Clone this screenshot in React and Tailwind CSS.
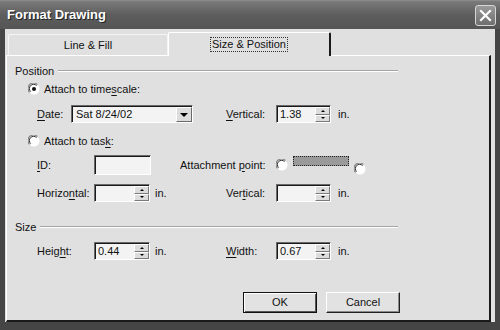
import React from "react";

function Radio({ checked }) {
    return (
        <svg width="12" height="12" viewBox="0 0 12 12" className="shrink-0">
            <circle cx="6" cy="6" r="5.5" fill="#ffffff" />
            <path d="M1.6 9.4 A5 5 0 0 1 9.4 1.6" fill="none" stroke="#808080" strokeWidth="1.2" />
            <path d="M2.6 8.6 A3.8 3.8 0 0 1 8.6 2.6" fill="none" stroke="#303030" strokeWidth="1" />
            {checked && <circle cx="6" cy="6" r="2" fill="#111111" />}
        </svg>
    );
}

function U({ children }) {
    return <span className="underline underline-offset-2">{children}</span>;
}

function Spinner({ value, w = "w-[55px]" }) {
    return (
        <div className={`${w} h-[18px] flex border-t border-l border-t-[#6a6a6a] border-l-[#6a6a6a] border-b border-r border-b-white border-r-white`}>
            <div className="flex-1 flex border-t border-l border-[#1a1a1a] bg-[#f3f3f3]">
                <div className="flex-1 pl-[2px] leading-[15px] text-[#111]">{value}</div>
                <div className="w-[15px] flex flex-col">
                    <div className="flex-1 bg-[#dcdcdc] border-t border-l border-white border-r border-b border-r-[#7a7a7a] border-b-[#7a7a7a] flex items-center justify-center">
                        <div className="w-0 h-0 border-l-[2px] border-r-[2px] border-b-[2px] border-l-transparent border-r-transparent border-b-black" />
                    </div>
                    <div className="flex-1 bg-[#dcdcdc] border-t border-l border-white border-r border-b border-r-[#7a7a7a] border-b-[#7a7a7a] flex items-center justify-center">
                        <div className="w-0 h-0 border-l-[2px] border-r-[2px] border-t-[2px] border-l-transparent border-r-transparent border-t-black" />
                    </div>
                </div>
            </div>
        </div>
    );
}

function GroupHead({ label, lineFrom }) {
    return (
        <div className="flex items-center h-[14px] pl-[8px] pr-[91px]">
            <span className="pr-[4px]">{label}</span>
            <div className="flex-1 flex flex-col">
                <div className="h-px bg-[#a5a5a5]" />
                <div className="h-px bg-white" />
            </div>
        </div>
    );
}

export default function App() {
    return (
        <div className="w-[500px] h-[330px] bg-[#454545] flex flex-col text-[11px] text-[#111] font-['Liberation_Sans',Arial,sans-serif]">
            {/* title bar */}
            <div className="h-[29px] shrink-0 flex items-center justify-between pl-[7px] pr-[4px] bg-gradient-to-b from-[#7b7b7b] via-[#5d5d5d] to-[#555555] border-t border-[#8a8a8a]">
                <span className="text-white font-bold text-[13px] [text-shadow:1px_1px_0_#222]">Format Drawing</span>
                <div className="w-[21px] h-[21px] rounded-[3px] border border-[#d6d6d6] bg-gradient-to-b from-[#9a9a9a] to-[#6e6e6e] flex items-center justify-center">
                    <svg width="13" height="13" viewBox="0 0 13 13">
                        <path d="M2 2 L11 11 M11 2 L2 11" stroke="#ffffff" strokeWidth="2.2" strokeLinecap="square" />
                    </svg>
                </div>
            </div>

            {/* body */}
            <div className="flex-1 mx-[5px] mb-[8px] bg-[#e0e0e0] flex flex-col pl-px pr-[4px]">
                {/* tabs */}
                <div className="h-[26px] shrink-0 flex items-end pl-[2px]">
                    <div className="w-[160px] h-[21px] border-t border-l border-r border-[#f4f4f4] rounded-t-[2px] flex items-center justify-center">
                        Line &amp; Fill
                    </div>
                    <div className="w-[163px] h-[24px] -mb-px z-10 bg-[#e0e0e0] border-t border-l border-white border-r-2 border-r-[#1a1a1a] rounded-t-[2px] flex items-center justify-center">
                        <span className="outline outline-1 outline-dotted outline-[#333] px-px leading-[13px]">Size &amp; Position</span>
                    </div>
                </div>

                {/* panel */}
                <div className="flex-1 border-t border-l border-white border-r-2 border-r-[#1a1a1a] border-b-2 border-b-[#1a1a1a] flex flex-col pt-[8px]">
                    <GroupHead label="Position" />

                    <div className="h-[14px] mt-[4px] flex items-center gap-[4px] pl-[21px]">
                        <Radio checked />
                        <span>Attach to time<U>s</U>cale:</span>
                    </div>

                    <div className="h-[18px] mt-[9px] flex items-center pl-[30px]">
                        <span className="w-[34px]"><U>D</U>ate:</span>
                        <div className="w-[122px] h-[18px] flex border-t border-l border-t-[#6a6a6a] border-l-[#6a6a6a] border-b border-r border-b-white border-r-white">
                            <div className="flex-1 flex border-t border-l border-[#1a1a1a] bg-[#f3f3f3]">
                                <div className="flex-1 pl-[3px] leading-[15px]">Sat 8/24/02</div>
                                <div className="w-[16px] bg-[#dcdcdc] border-t border-l border-white border-r border-b border-r-[#6a6a6a] border-b-[#6a6a6a] flex items-center justify-center">
                                    <div className="w-0 h-0 border-l-[4px] border-r-[4px] border-t-[4px] border-l-transparent border-r-transparent border-t-black" />
                                </div>
                            </div>
                        </div>
                        <span className="w-[50px] ml-[33px]"><U>V</U>ertical:</span>
                        <Spinner value="1.38" />
                        <span className="ml-[7px]">in.</span>
                    </div>

                    <div className="h-[14px] mt-[11px] flex items-center gap-[4px] pl-[21px]">
                        <Radio />
                        <span>Attach to tas<U>k</U>:</span>
                    </div>

                    <div className="h-[20px] mt-[7px] flex items-center pl-[30px]">
                        <span className="w-[57px]"><U>I</U>D:</span>
                        <div className="w-[57px] h-[20px] border-t border-l border-t-[#6a6a6a] border-l-[#6a6a6a] border-b border-r border-b-white border-r-white">
                            <div className="w-full h-full border-t border-l border-[#1a1a1a] bg-[#f3f3f3]" />
                        </div>
                        <span className="w-[96px] ml-[29px]">Attachment <U>p</U>oint:</span>
                        <div className="flex items-start h-[20px] gap-[5px]">
                            <div className="mt-[4px]"><Radio /></div>
                            <div className="w-[56px] h-[10px] mt-[1px] bg-[#9a9a9a] border border-dotted border-[#222]" />
                            <div className="mt-[8px]"><Radio /></div>
                        </div>
                    </div>

                    <div className="h-[18px] mt-[9px] flex items-center pl-[30px]">
                        <span className="w-[57px]">Horizo<U>n</U>tal:</span>
                        <Spinner value="" w="w-[56px]" />
                        <span className="w-[76px] pl-[5px]">in.</span>
                        <span className="w-[50px]">Ver<U>t</U>ical:</span>
                        <Spinner value="" />
                        <span className="ml-[7px]">in.</span>
                    </div>

                    <div className="mt-[18px]">
                        <GroupHead label="Size" />
                    </div>

                    <div className="h-[18px] mt-[8px] flex items-center pl-[30px]">
                        <span className="w-[57px]">Heig<U>h</U>t:</span>
                        <Spinner value="0.44" w="w-[56px]" />
                        <span className="w-[76px] pl-[5px]">in.</span>
                        <span className="w-[50px]"><U>W</U>idth:</span>
                        <Spinner value="0.67" />
                        <span className="ml-[7px]">in.</span>
                    </div>

                    <div className="mt-[32px] flex gap-[9px] pl-[236px]">
                        <button className="w-[74px] h-[21px] bg-[#e2e2e2] border border-[#111] shadow-[inset_1px_1px_0_#fff,inset_-1px_-1px_0_#555]">
                            OK
                        </button>
                        <button className="w-[74px] h-[21px] bg-[#e2e2e2] border-t border-l border-white border-r border-b border-r-[#222] border-b-[#222] shadow-[inset_-1px_-1px_0_#8a8a8a]">
                            Cancel
                        </button>
                    </div>
                </div>
            </div>
        </div>
    );
}
